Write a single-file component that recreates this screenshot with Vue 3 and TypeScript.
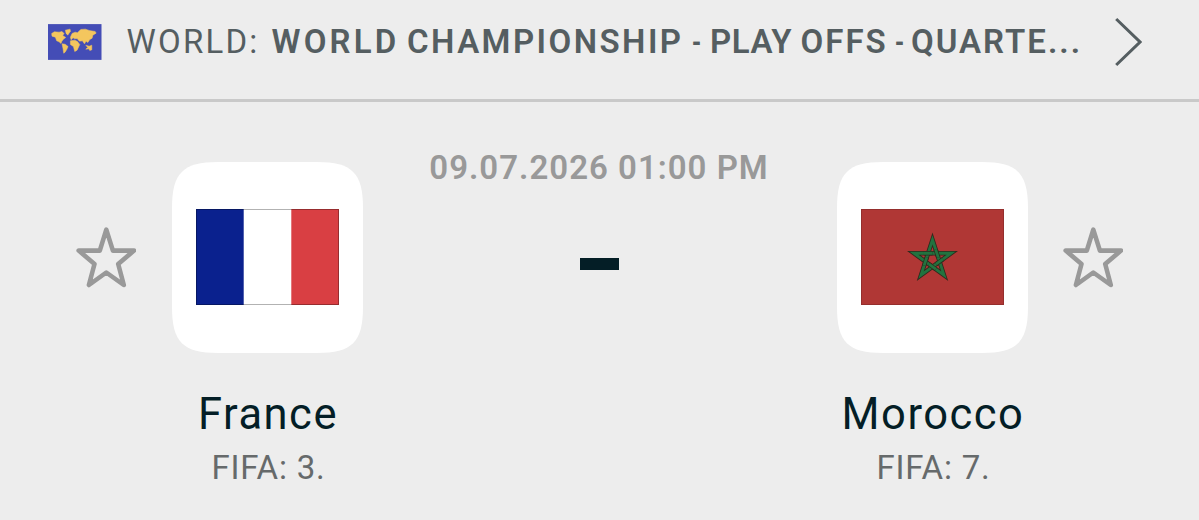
<script setup lang="ts">
interface Team {
  name: string
  rank: string
  flag: 'france' | 'morocco'
}

const teams: Team[] = [
  { name: 'France', rank: 'FIFA: 3.', flag: 'france' },
  { name: 'Morocco', rank: 'FIFA: 7.', flag: 'morocco' },
]

const league = ['WORLD', 'CHAMPIONSHIP', '-', 'PLAY', 'OFFS', '-', 'QUARTE...']

// Pentagram vertices in drawing order, and the short overlaps that weave its bands.
const tips = Array.from({ length: 5 }, (_, i) => {
  const angle = -Math.PI / 2 + (i * 4 * Math.PI) / 5
  return [71.5 + 19.5 * Math.cos(angle), 50.3 + 19.5 * Math.sin(angle)]
})
const pentagram = 'M' + tips.map((p) => p.join(' ')).join('L') + 'Z'
const overlaps = tips
  .map((a, i) => {
    const b = tips[(i + 1) % 5]
    const at = (t: number) => `${a[0] + (b[0] - a[0]) * t} ${a[1] + (b[1] - a[1]) * t}`
    return `M${at(0.27)}L${at(0.5)}`
  })
  .join('')

const starPath = 'M30.3 2.6L36.9 23.6H58L42.2 37L47.8 58L30.3 45.5L12.9 58L18.5 37L2.7 23.6H23.8Z'
</script>

<template>
  <main class="match">
    <header class="league">
      <svg class="world" viewBox="24 27 160 107">
        <rect x="24" y="27" width="160" height="107" fill="#444db6" />
        <g fill="#f4c65e" stroke="#f4c65e" stroke-width="1.5">
          <path d="M35 55L43 50L57 51L66 49L72 55L68 61L77 67L70 72L65 79L63 85L57 80L50 77L46 66L36 63Z" />
          <path d="M76 45L90 42L91 48L83 60L78 54Z" />
          <path d="M66 86L75 87L84 94L80 103L75 111L71 114L69 101Z" />
          <path d="M91 66L96 55L105 51L112 53L122 43L136 42L147 46L165 49L168 54L158 60L156 69L149 73L143 82L138 78L133 86L127 77L118 78L111 70L104 71L99 68L93 74Z" />
          <path d="M91 77L104 75L112 79L119 88L111 105L104 109L100 94L91 88Z" />
          <path d="M137 90L147 93L155 90L155 104L149 106L146 101L137 102L143 97Z" />
        </g>
      </svg>
      <div class="title">
        <span class="country">WORLD:</span>
        <strong><span v-for="(word, i) in league" :key="i">{{ word }}</span></strong>
      </div>
      <svg class="chevron" viewBox="0 0 28 50"><path d="M2.2 2L26 25L2.2 48" /></svg>
    </header>

    <section class="board">
      <template v-for="team in teams" :key="team.name">
        <div class="team" :class="team.flag">
          <svg class="star" viewBox="0 0 60 62"><path :d="starPath" /></svg>
          <div class="identity">
            <div class="badge">
              <svg class="tile" viewBox="0 0 191 191">
                <path d="M46 0H145C180 0 191 11 191 46V145C191 180 180 191 145 191H46C11 191 0 180 0 145V46C0 11 11 0 46 0Z" />
              </svg>
              <svg v-if="team.flag === 'france'" class="flag" viewBox="0 0 143 96">
                <rect width="143" height="96" fill="#fff" />
                <rect width="47.7" height="96" fill="#0a218e" />
                <rect x="95.3" width="47.7" height="96" fill="#d93f43" />
                <rect x=".5" y=".5" width="142" height="95" fill="none" stroke="#000" stroke-opacity=".3" />
              </svg>
              <svg v-else class="flag" viewBox="0 0 143 96">
                <rect width="143" height="96" fill="#b03735" />
                <rect x=".5" y=".5" width="142" height="95" fill="none" stroke="#000" stroke-opacity=".15" />
                <g fill="none" stroke-miterlimit="10">
                  <path :d="pentagram" stroke="#31291d" stroke-width="4.5" />
                  <path :d="pentagram" stroke="#22733f" stroke-width="2.8" />
                  <path :d="overlaps" stroke="#31291d" stroke-width="4.3" />
                  <path :d="overlaps" stroke="#22733f" stroke-width="2.8" />
                </g>
              </svg>
            </div>
            <h2>{{ team.name }}</h2>
            <p>{{ team.rank }}</p>
          </div>
        </div>
        <div v-if="team.flag === 'france'" class="center">
          <time>09.07.2026 01:00 PM</time>
          <div class="score"></div>
        </div>
      </template>
    </section>
  </main>
</template>

<style>
body { background: #ededed; }
</style>

<style scoped>
.match { width: 1199px; height: 520px; overflow: hidden; background: #ededed; font-family: Roboto, "Liberation Sans", sans-serif; color: #041e26; }
.league { box-sizing: border-box; height: 102px; border-bottom: 3px solid #c9c9c9; padding: 17px 57px 0 48px; display: flex; align-items: flex-start; color: #555e61; }
.world { width: 53.5px; height: 36px; margin-top: 6.5px; flex: none; }
.title { display: flex; margin-left: 25px; flex: 1; min-width: 0; white-space: nowrap; font-size: 33px; line-height: 50px; }
.country { width: 145px; flex: none; letter-spacing: 2.2px; }
strong { display: flex; font-weight: 600; }
strong span { flex: none; letter-spacing: 2px; }
strong span:nth-child(1) { width: 135.5px; letter-spacing: 3.2px; }
strong span:nth-child(2) { width: 284.5px; letter-spacing: 2.45px; }
strong span:nth-child(3) { width: 18.5px; }
strong span:nth-child(4) { width: 90.5px; letter-spacing: 0.6px; }
strong span:nth-child(5) { width: 94.5px; }
strong span:nth-child(6) { width: 16px; }
strong span:nth-child(3), strong span:nth-child(6) { transform: scaleX(0.75); transform-origin: left; }
.chevron { width: 28px; height: 50px; flex: none; }
.chevron path { fill: none; stroke: #555e61; stroke-width: 3; }
.board { display: flex; justify-content: space-between; padding: 60px 75px 0 76px; }
.team { display: flex; gap: 36px; }
.morocco { flex-direction: row-reverse; }
.star { width: 60px; height: 62px; margin-top: 65px; flex: none; }
.morocco .star { margin: 65px 1px 0 -1px; }
.star path { fill: none; stroke: #999; stroke-width: 4.6; stroke-linejoin: round; }
.identity { width: 191px; display: flex; flex-direction: column; align-items: center; }
.badge { display: grid; place-items: center; width: 191px; height: 191px; }
.badge > svg { grid-area: 1 / 1; }
.tile { width: 191px; height: 191px; fill: #fff; }
.flag { width: 143px; height: 96px; margin-bottom: 1px; }
h2 { margin: 37px 0 0; padding-left: 1px; font-size: 43.5px; line-height: 50px; font-weight: 400; letter-spacing: 1.5px; white-space: nowrap; }
p { margin: 8px 0 0; padding-left: 2px; font-size: 33px; line-height: 40px; color: #666a6b; letter-spacing: 0.8px; white-space: nowrap; }
.center { display: flex; flex-direction: column; align-items: center; flex: 1; padding-right: 2px; }
time { margin-top: -14px; font-size: 33px; line-height: 40px; font-weight: 600; letter-spacing: 1px; color: #999; white-space: nowrap; }
.score { width: 39px; height: 12px; margin-top: 70px; background: #041e26; }
</style>
